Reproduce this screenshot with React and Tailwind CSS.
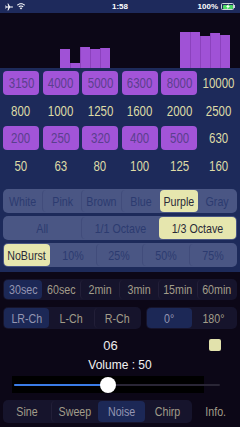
import React from "react";

const SANS = { fontFamily: '"Liberation Sans", Arial, sans-serif' };

function N({ children }) {
  return <span className="inline-block scale-x-[0.82] whitespace-nowrap">{children}</span>;
}

function Seg({ items, sel, navy, className = "" }) {
  return (
    <div
      className={`flex rounded-[5px] p-[1px] ${navy ? "bg-[#4a5684]" : "bg-[#16142c]"} ${className}`}
    >
      {items.map((t, i) => {
        const s = i === sel;
        const divider = i > 0 && i !== sel && i - 1 !== sel;
        let cls;
        if (s) cls = navy ? "bg-[#e6e6ae] text-[#2a2a38]" : "bg-[#1c2856] text-[#9496b2]";
        else cls = navy ? "text-[#2c3b70]" : "text-[#a29d8a]";
        let dv = "";
        if (divider) dv = navy ? "border-l border-[#414c7b]" : "border-l border-[#221f38]";
        return (
          <div
            key={i}
            className={`flex-1 min-w-0 flex items-center justify-center rounded-[4px] text-[13px] leading-none ${cls} ${dv}`}
          >
            <N>{t}</N>
          </div>
        );
      })}
    </div>
  );
}

const leftBars = [19, 5.5, 21, 18.7, 20];
const rightBars = [35.7, 36, 32, 34.7, 33.3];

function Cell({ v, btn }) {
  return btn ? (
    <div className="h-[24px] rounded-[4px] bg-[#a254d8] text-[#5b3f8e] flex items-center justify-center text-[14px] leading-none">
      <N>{v}</N>
    </div>
  ) : (
    <div className="h-[24px] text-[#dedba6] flex items-center justify-center text-[14px] leading-none">
      <N>{v}</N>
    </div>
  );
}

export default function App() {
  const rows = [
    { vals: ["3150", "4000", "5000", "6300", "8000", "10000"], btn: true },
    { vals: ["800", "1000", "1250", "1600", "2000", "2500"], btn: false },
    { vals: ["200", "250", "320", "400", "500", "630"], btn: true },
    { vals: ["50", "63", "80", "100", "125", "160"], btn: false },
  ];
  return (
    <div className="w-[240px] h-[427px] overflow-hidden bg-[#0c0717] flex flex-col" style={SANS}>
      {/* status bar */}
      <div className="h-[13px] bg-[#1e2a5c] flex items-center px-[5px] text-white">
        <div className="flex-1 flex items-center gap-[4px]">
          <svg width="8" height="8" viewBox="0 0 16 16" fill="white">
            <path d="M16 8c0-.7-.6-1-1.2-1H10L6.5 1H5l1.8 6H3L1.8 5H.5l.8 3-.8 3h1.3L3 9h3.8L5 15h1.5L10 9h4.8C15.4 9 16 8.7 16 8z" />
          </svg>
          <svg width="8" height="7" viewBox="0 0 16 13" fill="white">
            <path d="M8 0C4.9 0 2.2 1.2 0 3.2l1.5 1.6C3.3 3.2 5.5 2.2 8 2.2s4.7 1 6.5 2.6L16 3.2C13.8 1.2 11.1 0 8 0z" />
            <path d="M8 4.3c-2 0-3.8.8-5.1 2l1.5 1.6C5.3 7 6.6 6.5 8 6.5s2.7.5 3.6 1.4l1.5-1.6c-1.3-1.2-3.1-2-5.1-2z" />
            <path d="M8 8.6c-1 0-1.9.4-2.6 1L8 12.6l2.6-3c-.7-.6-1.6-1-2.6-1z" />
          </svg>
        </div>
        <div className="text-[8px] font-bold leading-none">1:58</div>
        <div className="flex-1 flex items-center justify-end gap-[3px]">
          <span className="text-[8px] font-bold leading-none">100%</span>
          <div className="flex items-center">
            <div className="w-[13px] h-[7px] rounded-[1.5px] border border-[#cfd2dc] p-[0.5px]">
              <div className="w-full h-full rounded-[1px] bg-[#4cd964] flex items-center justify-center">
                <svg width="4" height="5" viewBox="0 0 8 10" fill="white">
                  <path d="M5 0L0 6h3l-1 4 6-6H5z" />
                </svg>
              </div>
            </div>
            <div className="w-[1px] h-[3px] bg-[#cfd2dc]" />
          </div>
        </div>
      </div>

      {/* spectrum */}
      <div className="h-[55px] flex items-end pl-[60px]">
        {leftBars.map((h, i) => (
          <div
            key={"l" + i}
            className={`w-[10px] bg-[#a052d6] ${i > 0 ? "border-l border-[#8b42bd]" : ""}`}
            style={{ height: h }}
          />
        ))}
        <div className="w-[70px]" />
        {rightBars.map((h, i) => (
          <div
            key={"r" + i}
            className={`w-[10px] bg-[#a052d6] ${i > 0 ? "border-l border-[#8b42bd]" : ""}`}
            style={{ height: h }}
          />
        ))}
      </div>

      {/* navy section */}
      <div className="bg-[#1d2a5a] px-[3px] pt-[3px] pb-[5px]">
        <div className="grid grid-cols-6 gap-x-[3.3px] gap-y-[3.5px]">
          {rows.map((r, ri) =>
            r.vals.map((v, ci) => <Cell key={ri + "-" + ci} v={v} btn={r.btn && ci < 5} />)
          )}
        </div>
        <Seg
          navy
          className="mt-[11.5px] h-[24px]"
          items={["White", "Pink", "Brown", "Blue", "Purple", "Gray"]}
          sel={4}
        />
        <Seg navy className="mt-[3px] h-[24px]" items={["All", "1/1 Octave", "1/3 Octave"]} sel={2} />
        <Seg navy className="mt-[3px] h-[24px]" items={["NoBurst", "10%", "25%", "50%", "75%"]} sel={0} />
      </div>

      {/* dark section */}
      <div className="px-[3px] pt-[7px]">
        <Seg className="h-[21px]" items={["30sec", "60sec", "2min", "3min", "15min", "60min"]} sel={0} />
        <div className="mt-[7px] flex gap-[5px]">
          <Seg className="h-[22px] w-[138px]" items={["LR-Ch", "L-Ch", "R-Ch"]} sel={0} />
          <Seg className="h-[22px] flex-1" items={["0°", "180°"]} sel={0} />
        </div>
      </div>

      <div className="mt-[8px] h-[16px] flex items-center">
        <div className="flex-1" />
        <div className="text-[13px] leading-none text-[#ececec]">06</div>
        <div className="flex-1 flex justify-end pr-[19px]">
          <div className="w-[12px] h-[12px] rounded-[2px] bg-[#e2e2ac]" />
        </div>
      </div>

      <div className="mt-[5px] h-[14px] flex items-center justify-center text-[12px] leading-none text-[#f2f2f2]">
        Volume : 50
      </div>

      <div className="relative mt-[4px] ml-[12px] h-[17px] w-[208px]">
        <div className="h-full w-[192px] bg-black" />
        <div className="absolute left-[1.5px] right-0 top-[7.7px] h-[2px] rounded-full bg-[#2a2636]" />
        <div className="absolute left-[1.5px] w-[88px] top-[7.7px] h-[2px] rounded-full bg-[#3b7ce6]" />
        <div className="absolute left-[88.3px] top-[0.7px] w-[16px] h-[16px] rounded-full bg-white" />
      </div>

      <div className="mt-[7px] h-[23px] flex pl-[3px]">
        <Seg className="h-full w-[189px]" items={["Sine", "Sweep", "Noise", "Chirp"]} sel={2} />
        <div className="flex-1 flex items-center justify-center text-[13px] leading-none text-[#a29d8a]">
          <N>Info.</N>
        </div>
      </div>
    </div>
  );
}
